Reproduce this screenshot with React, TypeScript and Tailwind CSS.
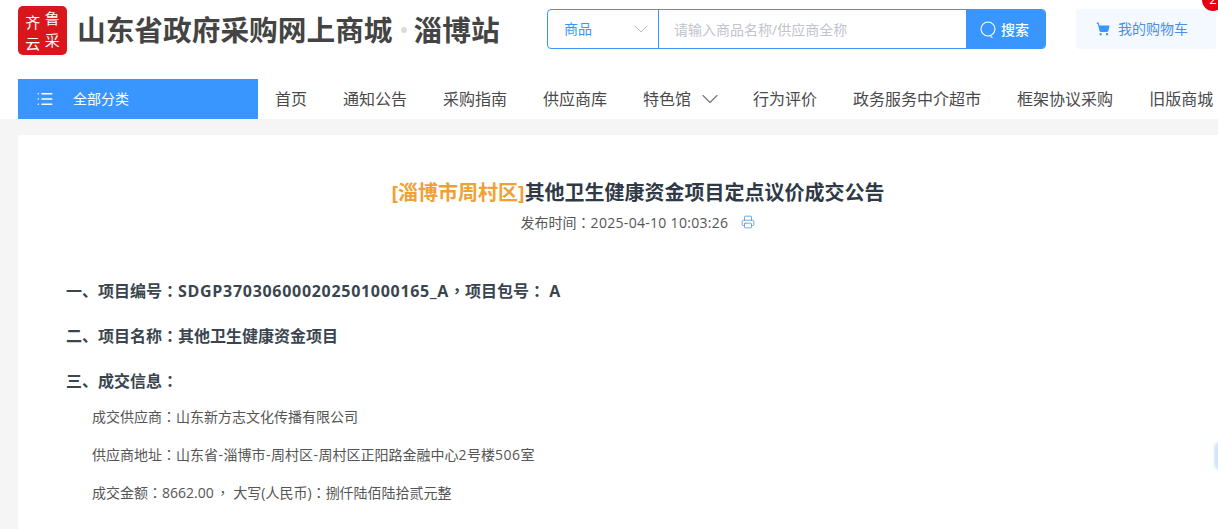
import { ChevronDown, ShoppingCart, List, Printer } from 'lucide-react';

const NAV = ['通知公告', '采购指南', '供应商库'];
const NAV_RIGHT = ['行为评价', '政务服务中介超市', '框架协议采购', '旧版商城'];
const CJK = { fontFamily: '"Open Sans", "Noto Sans CJK SC", sans-serif' };

// centred full-width punctuation, as in the reference
function P({ c }: { c: string }) {
  return <span className="font-['Noto_Sans_CJK_TC']">{c}</span>;
}

function Hy() {
  return <span className="px-[0.5px]">-</span>;
}

function Logo() {
  return (
    <div className="w-[49px] h-[49px] bg-[#d8171d] rounded-[5px] p-[5px] shrink-0">
      <div className="w-full h-full grid grid-cols-2 grid-rows-2 text-white text-[15px] leading-none place-items-center">
        <span className="translate-y-[2px]">齐</span>
        <span className="-translate-y-[2px]">鲁</span>
        <span className="translate-y-[3px]">云</span>
        <span>采</span>
      </div>
    </div>
  );
}

export default function App() {
  return (
    <main className="relative h-[529px] w-[1218px] overflow-hidden bg-[#f5f5f5] text-[#303133]" style={CJK}>
      <header className="bg-white h-[119px]">
        <div className="h-[79px] flex pl-[18px]">
          <div className="flex items-start pt-[6px] w-[529px] shrink-0">
            <Logo />
            <div className="ml-[10px] mt-[6px] flex items-center text-[28.7px] leading-[36px] font-semibold text-[#444] whitespace-nowrap">
              <span>山东省政府采购网上商城</span>
              <span className="w-[6px] h-[6px] rounded-full bg-[#dcdcdc] ml-[8px] mr-[7px]"></span>
              <span>淄博站</span>
            </div>
          </div>
          <div className="mt-[9px] flex h-[40px] w-[499px] shrink-0 rounded-[4px] border border-[#3996ff] overflow-hidden">
            <div className="w-[111px] shrink-0 border-r border-[#3996ff] flex items-center justify-between pl-[16px] pr-[5px] text-[14px] text-[#3996ff]">
              <span className="pb-[1px]">商品</span>
              <ChevronDown size={24} strokeWidth={1} className="text-[#b8bcc4]" />
            </div>
            <div className="flex-1 flex items-center pl-[15px] text-[14px] text-[#c0c4cc]">请输入商品名称/供应商全称</div>
            <div className="w-[79px] shrink-0 bg-[#3996ff] text-white flex items-center pl-[14px] gap-[5px] text-[14px] font-medium">
              <svg width="16" height="17" viewBox="0 0 16 17" fill="none" stroke="currentColor" strokeWidth="1.1">
                <circle cx="8" cy="8" r="7" />
                <path d="M10.5 15.5 L12.5 16.5" />
              </svg>
              <span>搜索</span>
            </div>
          </div>
          <div className="relative mt-[9px] ml-[30px] h-[40px] w-[140px] shrink-0 rounded-[4px] bg-[#f4f9ff] flex items-center pl-[20px] text-[14px] text-[#4a90e2]">
            <ShoppingCart size={14} fill="#3996ff" className="text-[#3996ff] mr-[8px]" />
            <span className="pb-[2px]">我的购物车</span>
            <span className="absolute left-[126px] top-[-20px] w-[22px] h-[22px] rounded-full bg-[#e60012] text-white text-[13px] flex items-center justify-center">2</span>
          </div>
        </div>
        <nav className="h-[40px] flex items-center pl-[18px] whitespace-nowrap text-[16px] text-[#4a4a4a]">
          <div className="w-[240px] shrink-0 h-full bg-[#3996ff] text-white flex items-center pl-[18px] text-[14px] mr-[17px]">
            <List size={18} strokeWidth={2} className="mr-[19px]" />
            <span className="pb-[1px]">全部分类</span>
          </div>
          <span className="mr-[36px]">首页</span>
          {NAV.map((n) => (
            <span key={n} className="mr-[36px]">{n}</span>
          ))}
          <span className="flex items-center mr-[36px]">
            特色馆
            <ChevronDown size={28} strokeWidth={1} className="ml-[5px] -mr-[7px] text-[#777]" />
          </span>
          {NAV_RIGHT.map((n) => (
            <span key={n} className="mr-[36px]">{n}</span>
          ))}
        </nav>
      </header>

      <section className="mt-[16px] ml-[18px] bg-white h-[400px] pt-[44px] pl-[48px]">
        <h1 className="text-center text-[20px] leading-[28px] font-bold text-[#2f3a46] pr-[8px] whitespace-nowrap">
          <span className="text-[#f0a035]">[淄博市周村区]</span>其他卫生健康资金项目定点议价成交公告
        </h1>
        <div className="mt-[5px] h-[20px] flex justify-center items-center text-[14px] leading-[20px] text-[#555] pr-[8px]">
          <span>发布时间<P c="：" /><span className="tracking-[0.3px]">2025-04-10 10:03:26</span></span>
          <Printer size={14} strokeWidth={1.5} className="ml-[13px] text-[#5b9bd5]" />
        </div>
        <div className="mt-[46px] text-[16px] leading-[24px] font-bold text-[#3a4550]">
          <p className="h-[24px]">一、项目编号<P c="：" /><span className="tracking-[0.7px]">SDGP370306000202501000165_A</span><P c="，" />项目包号<P c="：" /> A</p>
          <p className="h-[24px] mt-[21px]">二、项目名称<P c="：" />其他卫生健康资金项目</p>
          <p className="h-[24px] mt-[21px]">三、成交信息<P c="：" /></p>
        </div>
        <div className="mt-[14px] pl-[26px] text-[14px] leading-[20px] text-[#555] flex flex-col gap-[18px]">
          <p className="h-[20px]">成交供应商<P c="：" />山东新方志文化传播有限公司</p>
          <p className="h-[20px]">供应商地址<P c="：" />山东省<Hy />淄博市<Hy />周村区<Hy />周村区正阳路金融中心<span className="tracking-[0.5px]">2</span>号楼<span className="tracking-[0.5px]">506</span>室</p>
          <p className="h-[20px]">成交金额<P c="：" />8662.00<span className="ml-[2px]"><P c="，" /></span> 大写(人民币)<P c="：" />捌仟陆佰陆拾贰元整</p>
        </div>
      </section>
      {/* edge of the floating button, mostly off-page */}
      <div className="absolute right-[-12px] top-[441px] w-[16px] h-[30px] rounded-full bg-[#cfe5fb] blur-[1px]"></div>
    </main>
  );
}
